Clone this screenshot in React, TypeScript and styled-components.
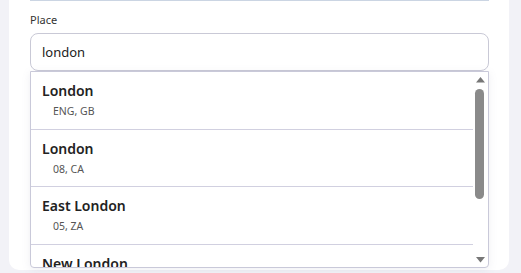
import styled, { createGlobalStyle } from 'styled-components';

type Place = {
  name: string;
  region: string;
};

const places: Place[] = [
  { name: 'London', region: 'ENG, GB' },
  { name: 'London', region: '08, CA' },
  { name: 'East London', region: '05, ZA' },
  { name: 'New London', region: 'CT, US' },
  { name: 'London', region: 'KY, US' },
  { name: 'London', region: 'OH, US' },
];

const GlobalStyle = createGlobalStyle`
  html, body {
    margin: 0;
    background: #f2f2f7;
    font-family: "Noto Sans", "Open Sans", sans-serif;
  }
  * {
    box-sizing: border-box;
  }
`;

function Arrow({ down }: { down?: boolean }) {
  return (
    <svg width="15" height="15" viewBox="0 0 15 15">
      <path d={down ? 'M3 5 L7.5 10.5 L12 5 Z' : 'M3 10.5 L7.5 5 L12 10.5 Z'} fill="#777777" />
    </svg>
  );
}

function App() {
  return (
    <>
      <GlobalStyle />
      <Page>
        <Card>
          <PrevField />
          <Label>Place</Label>
          <Input defaultValue="london" />
          <Dropdown>
            <List>
              {places.map((place, key) => (
                <Option key={key}>
                  <OptionName>{place.name}</OptionName>
                  <OptionRegion>{place.region}</OptionRegion>
                </Option>
              ))}
            </List>
            <ScrollBar>
              <Arrow />
              <Track>
                <Thumb />
              </Track>
              <Arrow down />
            </ScrollBar>
          </Dropdown>
        </Card>
      </Page>
    </>
  );
}

export default App;

const Page = styled.div`
  padding: 0 12px 3px 9px;
  height: 273px;
  overflow: hidden;
`;

const Card = styled.div`
  background: #ffffff;
  border-radius: 0 0 10px 10px;
  padding: 0 20px 0 21px;
  height: 270px;
`;

const PrevField = styled.div`
  height: 1px;
  background: #cbd5e3;
`;

const Label = styled.div`
  margin-top: 12px;
  height: 14px;
  line-height: 14px;
  font-size: 11px;
  color: #333333;
`;

const Input = styled.input`
  display: block;
  width: 100%;
  height: 38px;
  margin-top: 6px;
  padding: 0 11px;
  border: 1px solid #c9c9d6;
  border-radius: 8px;
  font-family: inherit;
  font-size: 13px;
  color: #222222;
  background: #ffffff;
  outline: none;
`;

const Dropdown = styled.div`
  display: flex;
  margin-top: 0;
  height: 197px;
  border: 1px solid #c9c9d9;
  border-radius: 0 0 4px 4px;
  background: #ffffff;
  box-shadow: 0 2px 8px rgba(120, 120, 160, 0.12);
  overflow: hidden;
`;

const List = styled.div`
  flex: 1;
  overflow: hidden;
`;

const ScrollBar = styled.div`
  width: 15px;
  display: flex;
  flex-direction: column;
  align-items: center;

  svg {
    display: block;
    flex: none;
  }
`;

const Track = styled.div`
  flex: 1;
  width: 100%;
  padding: 2px 4px 0 2px;
`;

const Thumb = styled.div`
  height: 110px;
  background: #8a8a8a;
  border-radius: 5px;
`;

const Option = styled.div`
  padding: 10px 11px 10.5px;
  border-bottom: 1px solid #d1d0e0;
`;

const OptionName = styled.div`
  font-size: 14px;
  font-weight: 600;
  line-height: 18px;
  color: #222222;
`;

const OptionRegion = styled.div`
  margin-top: 4px;
  padding-left: 11px;
  font-size: 10.5px;
  line-height: 14px;
  color: #555555;
`;
